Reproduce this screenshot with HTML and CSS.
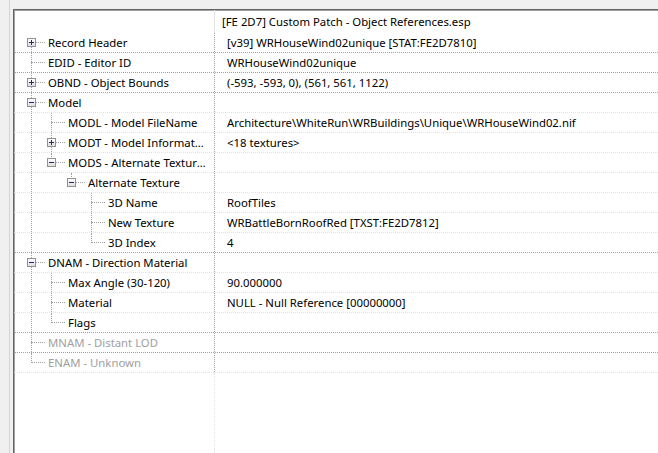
FILE: index.html
```html
<!DOCTYPE html>
<html lang="en">

<head>
    <meta charset="utf-8">
    <title>Object References</title>
    <link rel="stylesheet" href="styles.css">
</head>

<body>
    <div class="window">
        <div class="splitter"></div>
        <div class="tree">
            <!-- header -->
            <div class="row head">
                <div class="name"></div>
                <div class="value">[FE 2D7] Custom Patch - Object References.esp</div>
            </div>

            <div class="row hard">
                <div class="name"><span class="g first"><i class="box plus"></i></span><span class="label">Record Header</span></div>
                <div class="value">[v39] WRHouseWind02unique [STAT:FE2D7810]</div>
            </div>
            <div class="row hard">
                <div class="name"><span class="g tee"></span><span class="label">EDID - Editor ID</span></div>
                <div class="value">WRHouseWind02unique</div>
            </div>
            <div class="row hard">
                <div class="name"><span class="g tee"><i class="box plus"></i></span><span class="label">OBND - Object Bounds</span></div>
                <div class="value">(-593, -593, 0), (561, 561, 1122)</div>
            </div>
            <div class="row">
                <div class="name"><span class="g tee"><i class="box minus"></i></span><span class="label">Model</span></div>
                <div class="value"></div>
            </div>
            <div class="row">
                <div class="name"><span class="g pass"></span><span class="g tee"></span><span class="label">MODL - Model FileName</span></div>
                <div class="value">Architecture\WhiteRun\WRBuildings\Unique\WRHouseWind02.nif</div>
            </div>
            <div class="row">
                <div class="name"><span class="g pass"></span><span class="g tee"><i class="box plus"></i></span><span class="label">MODT - Model Information</span></div>
                <div class="value">&lt;18 textures&gt;</div>
            </div>
            <div class="row">
                <div class="name"><span class="g pass"></span><span class="g end"><i class="box minus"></i></span><span class="label">MODS - Alternate Textures</span></div>
                <div class="value"></div>
            </div>
            <div class="row">
                <div class="name"><span class="g pass"></span><span class="g"></span><span class="g end"><i class="box minus"></i></span><span class="label">Alternate Texture</span></div>
                <div class="value"></div>
            </div>
            <div class="row">
                <div class="name"><span class="g pass"></span><span class="g"></span><span class="g"></span><span class="g tee"></span><span class="label">3D Name</span></div>
                <div class="value">RoofTiles</div>
            </div>
            <div class="row">
                <div class="name"><span class="g pass"></span><span class="g"></span><span class="g"></span><span class="g tee"></span><span class="label">New Texture</span></div>
                <div class="value">WRBattleBornRoofRed [TXST:FE2D7812]</div>
            </div>
            <div class="row hard">
                <div class="name"><span class="g pass"></span><span class="g"></span><span class="g"></span><span class="g end"></span><span class="label">3D Index</span></div>
                <div class="value">4</div>
            </div>
            <div class="row">
                <div class="name"><span class="g tee"><i class="box minus"></i></span><span class="label">DNAM - Direction Material</span></div>
                <div class="value"></div>
            </div>
            <div class="row">
                <div class="name"><span class="g pass"></span><span class="g tee"></span><span class="label">Max Angle (30-120)</span></div>
                <div class="value">90.000000</div>
            </div>
            <div class="row">
                <div class="name"><span class="g pass"></span><span class="g tee"></span><span class="label">Material</span></div>
                <div class="value">NULL - Null Reference [00000000]</div>
            </div>
            <div class="row hard">
                <div class="name"><span class="g pass"></span><span class="g end"></span><span class="label">Flags</span></div>
                <div class="value"></div>
            </div>
            <div class="row hard">
                <div class="name"><span class="g tee"></span><span class="label dim">MNAM - Distant LOD</span></div>
                <div class="value"></div>
            </div>
            <div class="row">
                <div class="name"><span class="g end"></span><span class="label dim">ENAM - Unknown</span></div>
                <div class="value"></div>
            </div>

            <!-- empty space under the last record -->
            <div class="row fill">
                <div class="name"></div>
                <div class="value"></div>
            </div>
        </div>
    </div>
</body>

</html>
```

FILE: styles.css
```css
html,
body {
    margin: 0;
    height: 100%;
}

body {
    background-color: #f0f0f0;
    font-family: "Segoe UI", "Noto Sans", sans-serif;
    font-size: 11.35px;
    color: #000;
    overflow: hidden;
}

.window {
    height: 453px;
    display: flex;
    padding-left: 9px;
    box-sizing: border-box;
}

.splitter {
    width: 3px;
    flex: none;
    border-left: 1px solid #d4d4d4;
}

.tree {
    flex: 1;
    display: flex;
    flex-direction: column;
    margin-top: 9px;
    background-color: #fff;
    border-top: 1px solid #646464;
    border-left: 1px solid #646464;
    box-shadow: inset 1px 1px 0 #a0a0a0;
}

/* rows */
.row {
    display: flex;
    flex: none;
    height: 19px;
    border-bottom: 1px dotted #e2e2e2;
}

.row.hard {
    border-bottom-color: #a0a0a0;
}

.row.head {
    height: 23px;
    border-bottom: none;
}

.row.fill {
    flex: 1;
    border-bottom: none;
}

.name {
    width: 200px;
    flex: none;
    display: flex;
    padding-left: 7px;
    box-sizing: border-box;
}

.label {
    flex: 1;
    min-width: 0;
    padding: 0 8px 0 7px;
    line-height: 19px;
    white-space: nowrap;
    overflow: hidden;
    text-overflow: ellipsis;
}

.label.dim {
    color: #a0a0a0;
}

.value {
    flex: 1;
    padding-left: 12px;
    line-height: 19px;
    white-space: nowrap;
    border-left: 1px dotted #a0a0a0;
}

.head .value {
    padding-left: 7px;
    line-height: 23px;
    border-left: 1px solid #e5e5e5;
}

.fill .value {
    border-left-color: #e2e2e2;
}

/* tree guide lines */
.g {
    position: relative;
    width: 20px;
    flex: none;
}

.g::before,
.g::after {
    content: "";
    position: absolute;
    left: 10px;
}

.g.pass::before,
.g.tee::before {
    top: 0;
    bottom: 0;
    border-left: 1px dotted #a0a0a0;
}

.g.end::before {
    top: 0;
    height: 10px;
    border-left: 1px dotted #a0a0a0;
}

.g.first::before {
    top: 9px;
    bottom: 0;
    border-left: 1px dotted #a0a0a0;
}

.g.tee::after,
.g.end::after,
.g.first::after {
    top: 9px;
    width: 14px;
    border-top: 1px dotted #a0a0a0;
}

/* expander boxes */
.box {
    position: absolute;
    left: 6px;
    top: 5px;
    width: 7px;
    height: 7px;
    z-index: 1;
    border: 1px solid #919191;
    background: linear-gradient(#fff, #dedede);
}

.box::before,
.box::after {
    content: "";
    position: absolute;
    background-color: #1f2a66;
}

.box::before {
    left: 1px;
    top: 3px;
    width: 5px;
    height: 1px;
}

.box.plus::after {
    left: 3px;
    top: 1px;
    width: 1px;
    height: 5px;
}
```
